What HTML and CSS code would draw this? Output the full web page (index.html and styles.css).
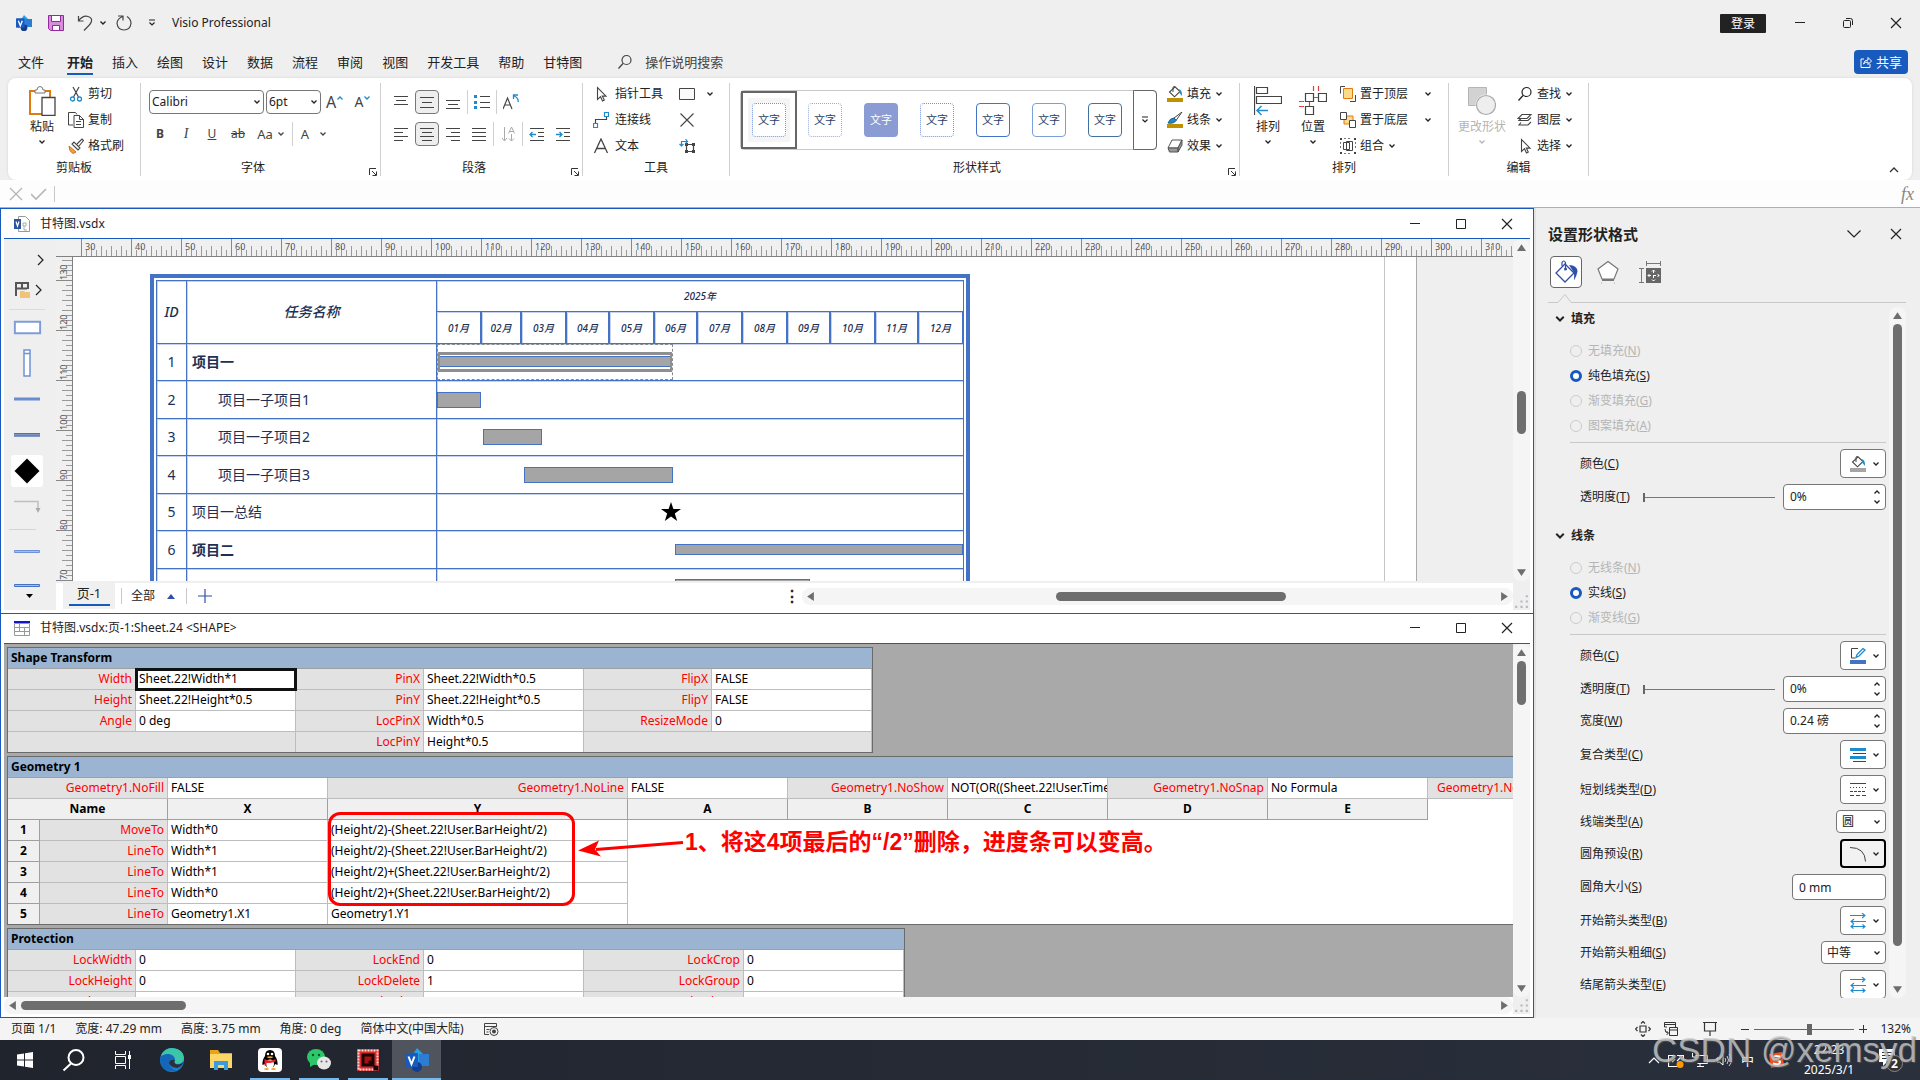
FILE: index.html
```
<!DOCTYPE html>
<html lang="zh-CN">
<head>
<meta charset="UTF-8">
<meta name="viewport" content="width=device-width, initial-scale=1.0">
<title>Visio Professional</title>
<link rel="stylesheet" href="styles.css">
</head>
<body>

<!-- Shared icons -->
<svg class="sprite" aria-hidden="true">
    <symbol id="chev" viewBox="0 0 8 8"><path d="M1.500 2.500 4 5l2.500-2.500" fill="none" stroke="currentColor" stroke-width="1.300"/></symbol>
    <symbol id="chev-up" viewBox="0 0 8 8"><path d="M1.500 5.500 4 3l2.500 2.500" fill="none" stroke="currentColor" stroke-width="1.300"/></symbol>
    <symbol id="chev-big" viewBox="0 0 16 16"><path d="M1.500 4.500 8 11l6.500-6.500" fill="none" stroke="currentColor" stroke-width="1.200"/></symbol>
    <symbol id="chev-right" viewBox="0 0 16 16"><path d="M5 3l5 5-5 5" fill="none" stroke="currentColor" stroke-width="1.200"/></symbol>
    <symbol id="more" viewBox="0 0 8 8"><path d="M1 1h6M1.500 3.500 4 6l2.500-2.500" fill="none" stroke="currentColor" stroke-width="1.200"/></symbol>
    <symbol id="close" viewBox="0 0 16 16"><path d="M3 3l10 10M13 3 3 13" fill="none" stroke="currentColor" stroke-width="1.200"/></symbol>
    <symbol id="min" viewBox="0 0 16 16"><path d="M3 7.500h10" stroke="currentColor"/></symbol>
    <symbol id="max" viewBox="0 0 16 16"><path d="M3.500 3.500h9v9h-9z" fill="none" stroke="currentColor"/></symbol>
    <symbol id="restore" viewBox="0 0 16 16"><rect x="3.500" y="5.500" width="7" height="7" rx="1" fill="none" stroke="currentColor"/><path d="M6 3.500h4.500q2 0 2 2V10" fill="none" stroke="currentColor"/></symbol>
    <symbol id="lens" viewBox="0 0 16 16"><circle cx="9.500" cy="6" r="4.500" fill="none" stroke="currentColor" stroke-width="1.200"/><path d="M6 9.500 1.500 14.500" stroke="currentColor" stroke-width="1.300"/></symbol>
    <symbol id="pointer" viewBox="0 0 16 16"><path d="M4.500 1.500v12l3-2.800 2 4.300 1.800-.9-2-4h3.700z" fill="#fff" stroke="#444" stroke-width="1.100"/></symbol>
    <symbol id="launcher" viewBox="0 0 8 8"><path d="M.5 7V.5H7M3 3l4 4M7.500 3.500v4h-4" fill="none" stroke="#333"/></symbol>
    <symbol id="bucket" viewBox="0 0 16 12"><path d="M8 .8 2.500 6l5 4.800L13 5.500z" fill="#fff" stroke="#444" stroke-width="1.100"/><path d="M6 6V1.200q1-1.500 2 0" fill="none" stroke="#444"/><path d="M11.500 3q4 1 3.500 7l-2.500-3z" fill="#1e8bcd"/></symbol>
    <symbol id="tri-l" viewBox="0 0 8 8"><path d="M7 0v8L1 4z" fill="#6e6e6e"/></symbol>
    <symbol id="tri-r" viewBox="0 0 8 8"><path d="M1 0v8l6-4z" fill="#6e6e6e"/></symbol>
    <symbol id="tri-u" viewBox="0 0 8 8"><path d="M0 7h8L4 1z" fill="#6e6e6e"/></symbol>
    <symbol id="tri-d" viewBox="0 0 8 8"><path d="M0 1h8L4 7z" fill="#6e6e6e"/></symbol>
    <symbol id="grip" viewBox="0 0 16 16"><path d="M12 2h2v2h-2zM12 7h2v2h-2zM7 7h2v2H7zM12 12h2v2h-2zM7 12h2v2H7zM2 12h2v2H2z" fill="#b4b8c0"/></symbol>
    <symbol id="visio" viewBox="0 0 24 24"><path d="M12 0l8 8-8 8-5-8z" fill="#29a0e8"/><path d="M14 6h10v12H14z" fill="#2b7cd3"/><circle cx="12" cy="19" r="5" fill="#103f91"/><rect y="5" width="13" height="14" rx="1" fill="#185abd"/><path d="M3.500 8.500 6.500 16l3-7.500" fill="none" stroke="#fff" stroke-width="2"/></symbol>
    <symbol id="arrows" viewBox="0 0 16 16"><path d="M0 2.500h15M12 0l3 2.500L12 5M1 8.500h15M4 6 1 8.500 4 11M1 13.500h14M3.500 11.500 1 13.500l2.500 2M12.500 11.500l2.500 2-2.500 2" fill="none" stroke="#1e8bcd" stroke-width="1.100"/></symbol>
</svg>

<!-- Title bar -->
<header class="titlebar">
    <svg class="i16"><use href="#visio"/></svg>
    <button class="tool save" aria-label="保存"><svg class="i16" viewBox="0 0 16 16"><path d="M.5 .5h15v15h-13l-2-2z" fill="#d58fd9" stroke="#9527a3"/><path d="M3.500 .5h9v6h-9zM4.500 10.500h7v5h-7z" fill="#fff" stroke="#9527a3"/></svg></button>
    <button class="tool undo" aria-label="撤消"><svg class="i16" viewBox="0 0 16 16"><path d="M1.500 1v5h5M1.500 6Q6 0 11 1.500t3 6Q13.500 9 7 15.500" fill="none" stroke="#444" stroke-width="1.200"/></svg></button>
    <button class="tool" aria-label="撤消选项"><svg class="i8"><use href="#chev"/></svg></button>
    <button class="tool redo" aria-label="重复"><svg class="i16" viewBox="0 0 16 16"><path d="M2 1h5v4.500M6.500 1.500Q1 4 1 8.500q1 6.500 7 6.500t7-6.500Q15 4 11 1.500" fill="none" stroke="#444" stroke-width="1.200"/></svg></button>
    <button class="tool qat" aria-label="自定义"><svg class="i8"><use href="#more"/></svg></button>
    <span class="app-name">Visio Professional</span>
    <button class="login">登录</button>
    <div class="app-buttons">
        <button class="tool" aria-label="最小化"><svg class="i16"><use href="#min"/></svg></button>
        <button class="tool" aria-label="还原"><svg class="i16"><use href="#restore"/></svg></button>
        <button class="tool" aria-label="关闭"><svg class="i16"><use href="#close"/></svg></button>
    </div>
</header>

<!-- Ribbon tabs -->
<nav class="tabs">
    <a href="#" class="file">文件</a>
    <a href="#" class="active">开始</a>
    <a href="#">插入</a>
    <a href="#">绘图</a>
    <a href="#">设计</a>
    <a href="#">数据</a>
    <a href="#">流程</a>
    <a href="#">审阅</a>
    <a href="#">视图</a>
    <a href="#">开发工具</a>
    <a href="#">帮助</a>
    <a href="#">甘特图</a>
    <button class="tell-me"><svg class="i16"><use href="#lens"/></svg>操作说明搜索</button>
    <button class="share"><svg class="i12" viewBox="0 0 12 12"><path d="M4 3H1v8.500h9V8M3.500 8Q4 4 8 4V1.500L11.500 5 8 8.500V6Q5 6 3.500 8z" fill="none" stroke="#fff"/></svg>共享</button>
</nav>

<!-- Ribbon -->
<section class="ribbon">
    <div class="group g-clip">
        <div class="group-body">
            <button class="big">
                <svg width="28" height="30" viewBox="0 0 28 30"><path d="M2 5h20v23H2z" fill="#fff" stroke="#e07b10" stroke-width="2"/><path d="M7 7V4h2q0-3.500 3-3.500T15 4h2v3z" fill="#fff" stroke="#777"/><path d="M14 11.500h13v18H14z" fill="#fff" stroke="#444" stroke-width="1.300"/></svg>
                <span>粘贴</span><svg class="i8"><use href="#chev"/></svg>
            </button>
            <div class="stack">
                <button class="small"><svg class="i16" viewBox="0 0 16 16"><path d="M5 1l5.500 10M11 1 5.500 11" stroke="#444" stroke-width="1.200"/><circle cx="4.500" cy="13" r="2" fill="none" stroke="#1e8bcd" stroke-width="1.300"/><circle cx="11.500" cy="13" r="2" fill="none" stroke="#1e8bcd" stroke-width="1.300"/></svg>剪切</button>
                <button class="small"><svg class="i16" viewBox="0 0 16 16"><path d="M5 13H.5V.5h7l1.500 2M6 3.500h5.500l4 4v8H6zM11.500 3.500v4h4M8 9.500h5M8 12.500h5" fill="none" stroke="#444"/></svg>复制</button>
                <button class="small"><svg class="i16" viewBox="0 0 16 16"><path d="M1 8l7 6-3 1.500q-4-2-4-7.500z" fill="#f0a04b" stroke="#d8700f"/><path d="M4 6l6 6 2-2-6-6zM9 6l5-5 1.500 1.500L11 8" fill="#fff" stroke="#444" stroke-width="1.100"/></svg>格式刷</button>
            </div>
        </div>
        <div class="group-name">剪贴板</div>
    </div>

    <div class="group g-font">
        <div class="group-body rows">
            <div class="row">
                <div class="pick face"><select aria-label="字体"><option>Calibri</option></select><svg class="i8"><use href="#chev"/></svg></div>
                <div class="pick size"><select aria-label="字号"><option>6pt</option></select><svg class="i8"><use href="#chev"/></svg></div>
                <button class="cell wide">A<svg class="i8 sup"><use href="#chev-up"/></svg></button>
                <button class="cell wide smaller">A<svg class="i8 sup"><use href="#chev"/></svg></button>
            </div>
            <div class="row">
                <button class="cell"><b>B</b></button>
                <button class="cell"><i class="serif">I</i></button>
                <button class="cell"><u>U</u></button>
                <button class="cell"><s>ab</s></button>
                <button class="cell wide">Aa<svg class="i8"><use href="#chev"/></svg></button>
                <span class="bar"></span>
                <button class="cell wide color">A<svg class="i8"><use href="#chev"/></svg></button>
            </div>
        </div>
        <div class="group-name with-launcher">字体</div>
        <svg class="i8 launcher"><use href="#launcher"/></svg>
    </div>

    <div class="group g-para">
        <div class="group-body rows">
            <div class="row">
                <button class="cell" aria-label="顶端对齐"><svg class="i16" viewBox="0 0 16 16"><path d="M1 2.500h14M3 6.500h10M1 10.500h14" stroke="#444"/></svg></button>
                <button class="cell on" aria-label="中部对齐"><svg class="i16" viewBox="0 0 16 16"><path d="M1 3.500h14M3 8.500h10M1 13.500h14" stroke="#444"/></svg></button>
                <button class="cell" aria-label="底端对齐"><svg class="i16" viewBox="0 0 16 16"><path d="M1 6.500h14M3 10.500h10M1 14.500h14" stroke="#444"/></svg></button>
                <span class="bar"></span>
                <button class="cell" aria-label="项目符号"><svg class="i16" viewBox="0 0 16 16"><path d="M0 1h3v3H0zM0 7h3v3H0zM0 12h3v3H0z" fill="#1e8bcd"/><path d="M6 2.500h10M6 8.500h10M6 13.500h10" stroke="#444"/></svg></button>
                <span class="bar"></span>
                <button class="cell" aria-label="旋转文字"><svg class="i16" viewBox="0 0 16 16"><path d="M0 15 4.500 4 9 15M2 11h5.500" fill="none" stroke="#444" stroke-width="1.200"/><path d="M15 8q1-4-4-6M10.500 5V1H15" fill="none" stroke="#1e8bcd" stroke-width="1.300"/></svg></button>
            </div>
            <div class="row">
                <button class="cell" aria-label="左对齐"><svg class="i16" viewBox="0 0 16 16"><path d="M1 2.500h14M1 6.500h9M1 10.500h14M1 14.500h9" stroke="#444"/></svg></button>
                <button class="cell on" aria-label="居中"><svg class="i16" viewBox="0 0 16 16"><path d="M1 2.500h14M3 6.500h10M1 10.500h14M3 14.500h10" stroke="#444"/></svg></button>
                <button class="cell" aria-label="右对齐"><svg class="i16" viewBox="0 0 16 16"><path d="M1 2.500h14M6 6.500h9M1 10.500h14M6 14.500h9" stroke="#444"/></svg></button>
                <button class="cell" aria-label="两端对齐"><svg class="i16" viewBox="0 0 16 16"><path d="M1 2.500h14M1 6.500h14M1 10.500h14M1 14.500h14" stroke="#444"/></svg></button>
                <span class="bar"></span>
                <button class="cell" aria-label="文字方向"><svg class="i16" viewBox="0 0 16 16"><path d="M4.500 1v13M2 12l2.500 3L7 12M11.500 8v7M9 12.500l2.500 2.500 2.500-2.500M8.500 7.500l3-6.500 3 6.500M9.500 5.500h4" fill="none" stroke="#aaa"/></svg></button>
                <span class="bar"></span>
                <button class="cell" aria-label="减少缩进"><svg class="i16" viewBox="0 0 16 16"><path d="M1 2.500h14M9 6.500h6M9 10.500h6M1 14.500h14" stroke="#444"/><path d="M7 8.500H1M3.500 6 1 8.500 3.500 11" fill="none" stroke="#1e8bcd" stroke-width="1.300"/></svg></button>
                <button class="cell" aria-label="增加缩进"><svg class="i16" viewBox="0 0 16 16"><path d="M1 2.500h14M9 6.500h6M9 10.500h6M1 14.500h14" stroke="#444"/><path d="M1 8.500h6M4.500 6 7 8.500 4.500 11" fill="none" stroke="#1e8bcd" stroke-width="1.300"/></svg></button>
            </div>
        </div>
        <div class="group-name with-launcher">段落</div>
        <svg class="i8 launcher"><use href="#launcher"/></svg>
    </div>

    <div class="group g-tools">
        <div class="group-body">
            <div class="stack">
                <button class="small"><svg class="i16"><use href="#pointer"/></svg>指针工具</button>
                <button class="small"><svg class="i16" viewBox="0 0 16 16"><path d="M2.500 11V7.500h11V5" fill="none" stroke="#444" stroke-width="1.200"/><path d="M.5 11.500h4v4h-4zM11.500 .5h4v4h-4z" fill="#fff" stroke="#1e8bcd" stroke-width="1.200"/></svg>连接线</button>
                <button class="small"><svg class="i16" viewBox="0 0 16 16"><path d="M1.500 15 8 1l6.500 14M4 10.500h8" fill="none" stroke="#444" stroke-width="1.300"/></svg>文本</button>
            </div>
            <div class="stack">
                <button class="small" aria-label="矩形"><svg class="i16" viewBox="0 0 16 16"><path d="M.5 2.500h15v11H.5z" fill="#fafafa" stroke="#444"/></svg><svg class="i8"><use href="#chev"/></svg></button>
                <button class="small" aria-label="删除"><svg class="i16" viewBox="0 0 16 16"><path d="M1.500 1.500l13 13M14.500 1.500l-13 13" stroke="#444" stroke-width="1.100"/></svg></button>
                <button class="small" aria-label="连接点"><svg class="i16" viewBox="0 0 16 16"><path d="M7.500 6.500h7v7h-7z" fill="none" stroke="#444" stroke-width="1.200"/><path d="M6 5h3v3H6zM13 5h3v3h-3zM6 12h3v3H6zM13 12h3v3h-3z" fill="#444"/><path d="M2.500 8V3.500H8M.5 6l2 2 2-2M6.500 1l2 2.500-2 2" fill="none" stroke="#1e8bcd" stroke-width="1.200"/></svg></button>
            </div>
        </div>
        <div class="group-name">工具</div>
    </div>

    <div class="group g-style">
        <div class="group-body">
            <div class="gallery">
                <button class="tile selected"><span class="dots">文字</span></button>
                <button class="tile"><span class="dots pale">文字</span></button>
                <button class="tile"><span class="solid">文字</span></button>
                <button class="tile"><span class="dots">文字</span></button>
                <button class="tile"><span class="line">文字</span></button>
                <button class="tile"><span class="line light">文字</span></button>
                <button class="tile"><span class="line teal">文字</span></button>
                <button class="gallery-more" aria-label="其他"><svg class="i8"><use href="#more"/></svg></button>
            </div>
            <div class="stack">
                <button class="small"><svg class="i16" viewBox="0 0 16 16"><use href="#bucket" width="16" height="12"/><path d="M0 12h16v4H0z" fill="#bf9000"/></svg>填充<svg class="i8"><use href="#chev"/></svg></button>
                <button class="small"><svg class="i16" viewBox="0 0 16 16"><path d="M15 0 7 6l2 2.500z" fill="#fff" stroke="#444"/><path d="M7 6q-4 0-6 5 6 1 8-2.500z" fill="#1e8bcd" stroke="#1b5f94"/><path d="M0 12h16v4H0z" fill="#bf9000"/></svg>线条<svg class="i8"><use href="#chev"/></svg></button>
                <button class="small"><svg class="i16" viewBox="0 0 16 16"><path d="M5 2h10l-4 8H1z" fill="#fff" stroke="#555"/><path d="M1 10h10v4H2.500zM15 2v5l-4 7v-4z" fill="#999" stroke="#555"/></svg>效果<svg class="i8"><use href="#chev"/></svg></button>
            </div>
        </div>
        <div class="group-name with-launcher">形状样式</div>
        <svg class="i8 launcher"><use href="#launcher"/></svg>
    </div>

    <div class="group g-arrange">
        <div class="group-body">
            <button class="big">
                <svg width="28" height="30" viewBox="0 0 28 30"><path d="M.5 0v29M2.500 1.500h11v6h-11zM2.500 10.500h25v7h-25z" fill="none" stroke="#444" stroke-width="1.200"/><path d="M14 24.500H3M7.500 20 3 24.500 7.500 29" fill="none" stroke="#1e8bcd" stroke-width="1.500"/></svg>
                <span>排列</span><svg class="i8"><use href="#chev"/></svg>
            </button>
            <button class="big">
                <svg width="28" height="30" viewBox="0 0 28 30"><path d="M6.500 7.500h8v8h-8zM19.500 7.500h8v8h-8zM6.500 20.500h8v8h-8z" fill="#fff" stroke="#444" stroke-width="1.200"/><path d="M14.500 0v5M19.500 0v5M15 11.500h4M0 15.500h5M0 20.500h5M10.500 16v4" stroke="#e03c3c" stroke-width="1.200"/></svg>
                <span>位置</span><svg class="i8"><use href="#chev"/></svg>
            </button>
            <div class="stack">
                <button class="small"><svg class="i16" viewBox="0 0 16 16"><path d="M5 .5H.5v7M10 15.500h5.500V9" fill="none" stroke="#444"/><path d="M3.500 2.500h9v10h-9z" fill="#fbdc8f" stroke="#e07b10"/></svg>置于顶层<svg class="i8 far"><use href="#chev"/></svg></button>
                <button class="small"><svg class="i16" viewBox="0 0 16 16"><path d="M4 4h9v8H4z" fill="#fbdc8f" stroke="#e07b10"/><path d="M.5 .5h6v7h-6zM9.500 8.500h6v7h-6z" fill="#fff" stroke="#444"/></svg>置于底层<svg class="i8 far"><use href="#chev"/></svg></button>
                <button class="small"><svg class="i16" viewBox="0 0 16 16"><path d="M3.500 4.500h6v7h-6zM6.500 3.500h6v9h-6z" fill="none" stroke="#444"/><path d="M0 0h2v2H0zM14 0h2v2h-2zM14 14h2v2h-2zM0 14h2v2H0z" fill="#444"/><path d="M4 .5h8M4 15.500h8M.5 4v8M15.500 4v8" stroke="#777" stroke-dasharray="2 2"/></svg>组合<svg class="i8"><use href="#chev"/></svg></button>
            </div>
        </div>
        <div class="group-name">排列</div>
    </div>

    <div class="group g-edit">
        <div class="group-body">
            <button class="big" disabled>
                <svg width="28" height="30" viewBox="0 0 28 30"><path d="M.5 1.500h18v18H.5z" fill="#d2d2d2" stroke="#b5b5b5"/><circle cx="18" cy="19" r="10.500" fill="#fff"/><circle cx="18" cy="19" r="9.500" fill="#eee" stroke="#aaa" stroke-width="1.200"/></svg>
                <span>更改形状</span><svg class="i8"><use href="#chev"/></svg>
            </button>
            <div class="stack">
                <button class="small"><svg class="i16"><use href="#lens"/></svg>查找<svg class="i8"><use href="#chev"/></svg></button>
                <button class="small"><svg class="i16" viewBox="0 0 16 16"><path d="M5 2.500h9l-4 4H1zM4 6.500l-2 2h9l3-3M4 10.500l-2 2.500h9l3-3" fill="none" stroke="#444" stroke-width="1.100"/></svg>图层<svg class="i8"><use href="#chev"/></svg></button>
                <button class="small"><svg class="i16"><use href="#pointer"/></svg>选择<svg class="i8"><use href="#chev"/></svg></button>
            </div>
        </div>
        <div class="group-name">编辑</div>
    </div>
    <button class="collapse" aria-label="折叠功能区"><svg class="i12" viewBox="0 0 12 12"><path d="M2 8l4-4 4 4" fill="none" stroke="#333" stroke-width="1.300"/></svg></button>
</section>

<!-- Formula bar -->
<div class="formula">
    <svg class="i16" viewBox="0 0 16 16"><path d="M2 2l12 12M14 2 2 14" stroke="#b5b5b5" stroke-width="1.300"/></svg>
    <svg class="i16" viewBox="0 0 16 16"><path d="M0 8l5 5L15 3" fill="none" stroke="#b5b5b5" stroke-width="1.600"/></svg>
    <input type="text" aria-label="公式">
    <em>fx</em>
</div>

<main>
    <div class="windows">
        <!-- Drawing window -->
        <section class="window">
            <div class="window-title">
                <svg class="i16" viewBox="0 0 16 16"><path d="M4.500 .5h7l4 4v11h-11z" fill="#fff" stroke="#999"/><path d="M9 7h3v3H9zM10 10v4h3" fill="none" stroke="#aaa"/><path d="M0 3h7v10H0z" fill="#2b579a"/><path d="M2 5.500 3.500 10 5 5.500" fill="none" stroke="#fff" stroke-width="1.200"/></svg>
                <span>甘特图.vsdx</span>
                <button class="tool" aria-label="最小化"><svg class="i16"><use href="#min"/></svg></button>
                <button class="tool" aria-label="最大化"><svg class="i16"><use href="#max"/></svg></button>
                <button class="tool" aria-label="关闭"><svg class="i16"><use href="#close"/></svg></button>
            </div>
            <div class="doc">
                <aside class="stencil">
                    <button class="expand" aria-label="展开"><svg class="i16"><use href="#chev-right"/></svg></button>
                    <button class="open" aria-label="形状"><svg class="i16" viewBox="0 0 16 16"><path d="M1 14V1h12v6M1 6.500h11M7 1v5" fill="none" stroke="#555" stroke-width="2"/><path d="M5 16V9h4l1 1h5v6z" fill="#f0c27a"/></svg><svg class="i16"><use href="#chev-right"/></svg></button>
                    <svg class="master" viewBox="0 0 36 36"><path d="M5.500 12h26v12h-26z" fill="#fff" stroke="#7f9cd8" stroke-width="2"/></svg>
                    <svg class="master" viewBox="0 0 36 36"><path d="M15 5h6v26h-6zM15 8.500h6" fill="#fff" stroke="#6f92d6" stroke-width="1.500"/></svg>
                    <svg class="master" viewBox="0 0 36 36"><path d="M5 16.500h26v3H5z" fill="#6b8bd0"/></svg>
                    <svg class="master" viewBox="0 0 36 36"><path d="M5 16.500h26v3H5z" fill="#8296bd"/><path d="M5 16.500h26M5 19h26" stroke="#4472c4"/></svg>
                    <svg class="master" viewBox="0 0 36 36"><rect x="2" y="2" width="32" height="32" rx="3" fill="#fff"/><path d="M18 5.500 30.500 18 18 30.500 5.500 18z"/></svg>
                    <svg class="master" viewBox="0 0 36 36"><path d="M5 12.500h24V21" fill="none" stroke="#bfbfbf" stroke-width="1.500"/><path d="M26.500 19h5L29 24z" fill="#aaa"/></svg>
                    <hr>
                    <svg class="master" viewBox="0 0 36 36"><path d="M5.500 16.500h25v2h-25z" fill="#a9bce3" stroke="#6f92d6"/></svg>
                    <svg class="master" viewBox="0 0 36 36"><path d="M5.500 14.500h25v2h-25z" fill="#a9bce3" stroke="#4472c4"/><path d="M17 24h7l-3.500 4z"/></svg>
                </aside>
                <div class="view">
                    <div class="ruler-top">
                        <span>30</span><span>40</span><span>50</span><span>60</span><span>70</span><span>80</span><span>90</span><span>100</span><span>110</span><span>120</span><span>130</span><span>140</span><span>150</span><span>160</span><span>170</span><span>180</span><span>190</span><span>200</span><span>210</span><span>220</span><span>230</span><span>240</span><span>250</span><span>260</span><span>270</span><span>280</span><span>290</span><span>300</span><span>310</span>
                    </div>
                    <div class="canvas">
                        <div class="ruler-side">
                            <span>130</span><span>120</span><span>110</span><span>100</span><span>90</span><span>80</span><span>70</span>
                        </div>
                        <div class="page">
                            <div class="printable">
                                <div class="chart">
                                    <table class="gantt">
                                        <colgroup>
                                            <col class="col-id"><col class="col-name">
                                            <col class="d31"><col class="d28"><col class="d31"><col class="d30"><col class="d31"><col class="d30"><col class="d31"><col class="d31"><col class="d30"><col class="d31"><col class="d30"><col class="d31">
                                        </colgroup>
                                        <thead>
                                            <tr><th rowspan="2">ID</th><th rowspan="2">任务名称</th><th colspan="12" class="time">2025年</th></tr>
                                            <tr class="months"><th>01月</th><th>02月</th><th>03月</th><th>04月</th><th>05月</th><th>06月</th><th>07月</th><th>08月</th><th>09月</th><th>10月</th><th>11月</th><th>12月</th></tr>
                                        </thead>
                                        <tbody>
                                            <tr><td>1</td><td class="name"><b>项目一</b></td><td colspan="12"><div class="picked" style="width: 236px"><div class="task summary"></div></div></td></tr>
                                            <tr><td>2</td><td class="name sub">项目一子项目1</td><td colspan="12"><div class="task" style="width: 44px"></div></td></tr>
                                            <tr><td>3</td><td class="name sub">项目一子项目2</td><td colspan="12"><div class="task" style="margin-left: 46px; width: 59px"></div></td></tr>
                                            <tr><td>4</td><td class="name sub">项目一子项目3</td><td colspan="12"><div class="task" style="margin-left: 87px; width: 149px"></div></td></tr>
                                            <tr><td>5</td><td class="name">项目一总结</td><td colspan="12"><svg class="star" style="margin-left: 224px" viewBox="0 0 20 20"><path d="M10 0l2.400 7H20l-6.200 4.500L16.200 19 10 14.500 3.800 19l2.400-7.500L0 7h7.600z"/></svg></td></tr>
                                            <tr><td>6</td><td class="name"><b>项目二</b></td><td colspan="12"><div class="task thin" style="margin-left: 238px"></div></td></tr>
                                            <tr><td></td><td></td><td colspan="12"><div class="task" style="margin-left: 238px; width: 135px"></div></td></tr>
                                        </tbody>
                                    </table>
                                </div>
                            </div>
                        </div>
                    </div>
                    <div class="page-tabs">
                        <button class="page-tab">页-1</button>
                        <button class="all-pages">全部<svg class="i8" viewBox="0 0 8 8"><path d="M0 7h8L4 2z" fill="#2f4fa8"/></svg></button>
                        <button class="add-page" aria-label="插入页"><svg class="i16" viewBox="0 0 16 16"><path d="M8 1v14M1 8h14" stroke="#2f4fa8" stroke-width="1.200"/></svg></button>
                        <span class="splitter">⋮</span>
                        <div class="scroll-x">
                            <svg><use href="#tri-l"/></svg>
                            <div class="track page-pos"><div class="thumb"></div></div>
                            <svg><use href="#tri-r"/></svg>
                        </div>
                    </div>
                </div>
                <div class="side">
                    <div class="scroll-y">
                        <svg><use href="#tri-u"/></svg>
                        <div class="track doc-pos"><div class="thumb"></div></div>
                        <svg><use href="#tri-d"/></svg>
                    </div>
                    <svg class="grip high"><use href="#grip" y="12" width="17" height="17"/></svg>
                </div>
            </div>
        </section>

        <!-- ShapeSheet window -->
        <section class="window sheet-window">
            <div class="window-title">
                <svg class="i16" viewBox="0 0 16 16"><path d="M.5 3.500h15v12H.5zM.5 7.500h15M.5 11.500h15M5.500 3.500v8M10.500 7.500v8" fill="#fff" stroke="#999"/><path d="M0 1h16v2H0z" fill="#1414c8"/></svg>
                <span>甘特图.vsdx:页-1:Sheet.24 &lt;SHAPE&gt;</span>
                <button class="tool" aria-label="最小化"><svg class="i16"><use href="#min"/></svg></button>
                <button class="tool" aria-label="最大化"><svg class="i16"><use href="#max"/></svg></button>
                <button class="tool" aria-label="关闭"><svg class="i16"><use href="#close"/></svg></button>
            </div>
            <div class="doc">
                <div class="view">
                    <div class="sheet">
                        <table class="cells">
                            <colgroup><col class="w128"><col class="w160"><col class="w128"><col class="w160"><col class="w128"><col class="w160"></colgroup>
                            <tr><th class="section" colspan="6">Shape Transform</th></tr>
                            <tr><th>Width</th><td class="current">Sheet.22!Width*1</td><th>PinX</th><td>Sheet.22!Width*0.5</td><th>FlipX</th><td>FALSE</td></tr>
                            <tr><th>Height</th><td>Sheet.22!Height*0.5</td><th>PinY</th><td>Sheet.22!Height*0.5</td><th>FlipY</th><td>FALSE</td></tr>
                            <tr><th>Angle</th><td>0 deg</td><th>LocPinX</th><td>Width*0.5</td><th>ResizeMode</th><td>0</td></tr>
                            <tr><th colspan="2"></th><th>LocPinY</th><td>Height*0.5</td><th colspan="2"></th></tr>
                        </table>

                        <table class="cells">
                            <colgroup><col class="w32"><col class="w128"><col class="w160"><col class="w300"><col class="w160"><col class="w160"><col class="w160"><col class="w160"><col class="w160"><col class="w160"></colgroup>
                            <tr><th class="section" colspan="10">Geometry 1</th></tr>
                            <tr><th colspan="2">Geometry1.NoFill</th><td>FALSE</td><th>Geometry1.NoLine</th><td>FALSE</td><th>Geometry1.NoShow</th><td>NOT(OR((Sheet.22!User.TimescaleEnd</td><th>Geometry1.NoSnap</th><td>No Formula</td><th class="start">Geometry1.NoQuickDrag</th></tr>
                            <tr class="heads"><th colspan="2">Name</th><th>X</th><th>Y</th><th>A</th><th>B</th><th>C</th><th>D</th><th>E</th><td rowspan="6"></td></tr>
                            <tr><th class="num">1</th><th>MoveTo</th><td>Width*0</td><td>(Height/2)-(Sheet.22!User.BarHeight/2)</td><td class="blank" colspan="5" rowspan="5"></td></tr>
                            <tr><th class="num">2</th><th>LineTo</th><td>Width*1</td><td>(Height/2)-(Sheet.22!User.BarHeight/2)</td></tr>
                            <tr><th class="num">3</th><th>LineTo</th><td>Width*1</td><td>(Height/2)+(Sheet.22!User.BarHeight/2)</td></tr>
                            <tr><th class="num">4</th><th>LineTo</th><td>Width*0</td><td>(Height/2)+(Sheet.22!User.BarHeight/2)</td></tr>
                            <tr><th class="num">5</th><th>LineTo</th><td>Geometry1.X1</td><td>Geometry1.Y1</td></tr>
                        </table>

                        <table class="cells">
                            <colgroup><col class="w128"><col class="w160"><col class="w128"><col class="w160"><col class="w160"><col class="w160"></colgroup>
                            <tr><th class="section" colspan="6">Protection</th></tr>
                            <tr><th>LockWidth</th><td>0</td><th>LockEnd</th><td>0</td><th>LockCrop</th><td>0</td></tr>
                            <tr><th>LockHeight</th><td>0</td><th>LockDelete</th><td>1</td><th>LockGroup</th><td>0</td></tr>
                            <tr><th>LockAspect</th><td>0</td><th>LockSelect</th><td>0</td><th>LockCalcWH</th><td>0</td></tr>
                        </table>

                        <!-- Callout over the Y cells -->
                        <div class="callout-box"></div>
                        <svg class="callout-arrow" viewBox="0 0 106 24"><path d="M105 6.500 18 13.500" stroke="#f00" stroke-width="3"/><path d="M0 14.500 21 4.500l-4 9 6 7z" fill="#f00"/></svg>
                        <p class="callout-text">1、将这4项最后的“/2”删除，进度条可以变高。</p>
                    </div>
                    <div class="scroll-x">
                        <svg><use href="#tri-l"/></svg>
                        <div class="track"><div class="thumb"></div></div>
                        <svg><use href="#tri-r"/></svg>
                    </div>
                </div>
                <div class="side">
                    <div class="scroll-y">
                        <svg><use href="#tri-u"/></svg>
                        <div class="track"><div class="thumb"></div></div>
                        <svg><use href="#tri-d"/></svg>
                    </div>
                    <svg class="grip"><use href="#grip"/></svg>
                </div>
            </div>
        </section>
    </div>

    <!-- Format shape pane -->
    <aside class="pane">
        <div class="pane-head">
            <h2>设置形状格式</h2>
            <button class="tool" aria-label="选项"><svg class="i16"><use href="#chev-big"/></svg></button>
            <button class="tool" aria-label="关闭"><svg class="i16"><use href="#close"/></svg></button>
        </div>
        <div class="pane-tabs">
            <button class="active" aria-label="填充与线条"><svg width="24" height="24" viewBox="0 0 24 24"><path d="M11 4 2 13l9 9 9-9z" fill="#fff" stroke="#2f4fa8" stroke-width="1.300"/><path d="M8 6V2.500Q9.500-.5 11.500 2.500V9" fill="none" stroke="#2f4fa8" stroke-width="1.200"/><circle cx="11.500" cy="9" r="1.500" fill="#2f4fa8"/><path d="M15 5q8 0 8.500 6.500-1 5-3.500 9 .5-7-.5-8.500z" fill="#2f4fa8"/></svg></button>
            <button aria-label="效果"><svg width="24" height="24" viewBox="0 0 24 24"><path d="M12 1.500 22 9l-4 10H6L2 9z" fill="#fff" stroke="#777" stroke-width="1.200"/><path d="M6 19h12v2H6z" fill="#777"/><path d="M5.500 22v2M18.500 22v2" stroke="#ccc"/></svg></button>
            <button aria-label="大小"><svg width="24" height="24" viewBox="0 0 24 24"><path d="M8 3.500h14M8.500 1v5M22.500 1v5M3.500 8v14M1 8.500h5M1 22.500h5" stroke="#777"/><path d="M8 8h15v15H8z" fill="#666"/><path d="M15.500 10v11M10 15.500h11" stroke="#fff" stroke-dasharray="3 2"/><path d="M14 11.500l1.500-1.500 1.500 1.500M14 19.500l1.500 1.500 1.500-1.500M11.500 14 10 15.500l1.500 1.500M19.500 14l1.500 1.500-1.500 1.500" fill="none" stroke="#fff"/></svg></button>
        </div>
        <svg class="pane-line" height="10" viewBox="0 0 358 10"><path d="M0 9.500h10L17 1.500l6 8h335" fill="none" stroke="#c8c8c8"/></svg>
        <div class="pane-body">
            <form>
                <h3><svg class="i12" viewBox="0 0 8 8"><use href="#chev"/></svg>填充</h3>
                <div class="radios">
                    <label class="off"><input type="radio" name="fill" disabled>无填充(<u>N</u>)</label>
                    <label><input type="radio" name="fill" checked>纯色填充(<u>S</u>)</label>
                    <label class="off"><input type="radio" name="fill" disabled>渐变填充(<u>G</u>)</label>
                    <label class="off"><input type="radio" name="fill" disabled>图案填充(<u>A</u>)</label>
                </div>
                <div class="fields">
                    <div class="field tall"><label for="fill-color">颜色(<u>C</u>)</label><button type="button" id="fill-color" class="drop"><svg class="i16" viewBox="0 0 16 16"><use href="#bucket" width="16" height="12"/><path d="M0 12h16v4H0z" fill="#a5a5a5"/></svg><svg class="i8"><use href="#chev"/></svg></button></div>
                    <div class="field"><label for="fill-alpha">透明度(<u>T</u>)</label><input type="range" id="fill-alpha" value="0"><div class="spin"><input type="text" value="0%" aria-label="透明度"><span><svg class="i8"><use href="#chev-up"/></svg><svg class="i8"><use href="#chev"/></svg></span></div></div>
                </div>
                <h3><svg class="i12" viewBox="0 0 8 8"><use href="#chev"/></svg>线条</h3>
                <div class="radios">
                    <label class="off"><input type="radio" name="line" disabled>无线条(<u>N</u>)</label>
                    <label><input type="radio" name="line" checked>实线(<u>S</u>)</label>
                    <label class="off"><input type="radio" name="line" disabled>渐变线(<u>G</u>)</label>
                </div>
                <div class="fields">
                    <div class="field tall"><label for="line-color">颜色(<u>C</u>)</label><button type="button" id="line-color" class="drop"><svg class="i16" viewBox="0 0 16 16"><path d="M8 .5H1.500V10H5" fill="none" stroke="#444"/><path d="M6 9.500l1-3L13 .5l2 1.500-6 6z" fill="#fff" stroke="#1e8bcd" stroke-width="1.300"/><path d="M0 12h16v4H0z" fill="#4472c4"/></svg><svg class="i8"><use href="#chev"/></svg></button></div>
                    <div class="field"><label for="line-alpha">透明度(<u>T</u>)</label><input type="range" id="line-alpha" value="0"><div class="spin"><input type="text" value="0%" aria-label="透明度"><span><svg class="i8"><use href="#chev-up"/></svg><svg class="i8"><use href="#chev"/></svg></span></div></div>
                    <div class="field"><label for="line-width">宽度(<u>W</u>)</label><div class="spin"><input type="text" id="line-width" value="0.24 磅"><span><svg class="i8"><use href="#chev-up"/></svg><svg class="i8"><use href="#chev"/></svg></span></div></div>
                    <div class="field tall"><label for="compound">复合类型(<u>C</u>)</label><button type="button" id="compound" class="drop"><svg class="i16" viewBox="0 0 16 16"><path d="M0 1h16v3H0zM0 9h16v3H0z" fill="#1e8bcd"/><path d="M3 6.500h13M3 14.500h13" stroke="#444"/></svg><svg class="i8"><use href="#chev"/></svg></button></div>
                    <div class="field tall"><label for="dash">短划线类型(<u>D</u>)</label><button type="button" id="dash" class="drop"><svg class="i16" viewBox="0 0 16 16"><path d="M0 1.500h16" stroke="#444"/><path d="M0 5.500h16" stroke="#444" stroke-dasharray="1 2"/><path d="M0 9.500h16" stroke="#444" stroke-dasharray="3 1"/><path d="M0 13.500h16" stroke="#444" stroke-dasharray="4 2"/></svg><svg class="i8"><use href="#chev"/></svg></button></div>
                    <div class="field low"><label for="cap">线端类型(<u>A</u>)</label><div class="pick cap"><select id="cap"><option>圆</option></select><svg class="i8"><use href="#chev"/></svg></div></div>
                    <div class="field tall"><label for="rounding">圆角预设(<u>R</u>)</label><button type="button" id="rounding" class="drop focus"><svg class="i16" viewBox="0 0 16 16"><path d="M0 1.500q15 0 15.500 14" fill="none" stroke="#444"/></svg><svg class="i8"><use href="#chev"/></svg></button></div>
                    <div class="field"><label for="radius">圆角大小(<u>S</u>)</label><input type="text" id="radius" class="text" value="0 mm"></div>
                    <div class="field tall"><label for="begin-type">开始箭头类型(<u>B</u>)</label><button type="button" id="begin-type" class="drop"><svg class="i16"><use href="#arrows"/></svg><svg class="i8"><use href="#chev"/></svg></button></div>
                    <div class="field low"><label for="begin-size">开始箭头粗细(<u>S</u>)</label><div class="pick mid"><select id="begin-size"><option>中等</option></select><svg class="i8"><use href="#chev"/></svg></div></div>
                    <div class="field tall"><label for="end-type">结尾箭头类型(<u>E</u>)</label><button type="button" id="end-type" class="drop"><svg class="i16"><use href="#arrows"/></svg><svg class="i8"><use href="#chev"/></svg></button></div>
                </div>
            </form>
            <div class="scroll-y">
                <svg><use href="#tri-u"/></svg>
                <div class="track"><div class="thumb"></div></div>
                <svg><use href="#tri-d"/></svg>
            </div>
        </div>
    </aside>
</main>

<!-- Status bar -->
<footer class="status">
    <span>页面 1/1</span>
    <span>宽度: 47.29 mm</span>
    <span>高度: 3.75 mm</span>
    <span>角度: 0 deg</span>
    <span>简体中文(中国大陆)</span>
    <svg class="i16" viewBox="0 0 16 16"><path d="M6 13.500H1.500v-11h12V6M1.500 5.500h12M3.500 8.500h3M3.500 11h2" fill="none" stroke="#444"/><circle cx="11" cy="10.500" r="4" fill="none" stroke="#444"/><circle cx="11" cy="10.500" r="2" fill="#444"/></svg>
    <div class="zoom">
        <svg class="i16" viewBox="0 0 16 16"><path d="M5 5h6v6H5zM6 2.500 8 .5l2 2M6 13.500l2 2 2-2M2.500 6l-2 2 2 2M13.500 6l2 2-2 2" fill="none" stroke="#333" stroke-width="1.200"/></svg>
        <svg class="i16" viewBox="0 0 16 16"><path d="M4 6H1.500v-4.500h11V6M1.500 3.500h11M6.500 6.500h8v8h-8zM6.500 9h8M2 8q0 4 3 4M3.500 10 5.500 12l-2 2" fill="none" stroke="#333"/></svg>
        <svg class="i16 present" viewBox="0 0 16 16"><path d="M1 1.500h14M2.500 2v8h11V2M8 10v5" fill="none" stroke="#333" stroke-width="1.200"/></svg>
        <button class="tool" aria-label="缩小"><svg class="i8" viewBox="0 0 8 8"><path d="M0 4.500h8" stroke="#333"/></svg></button>
        <input type="range" value="55" aria-label="缩放">
        <button class="tool" aria-label="放大"><svg class="i8" viewBox="0 0 8 8"><path d="M0 4.500h8M4.500 0v8" stroke="#333"/></svg></button>
        <span>132%</span>
    </div>
</footer>

<!-- Taskbar -->
<div class="taskbar">
    <button aria-label="开始"><svg width="16" height="16" viewBox="0 0 16 16"><path d="M0 2.500 7 1.500v6H0zM8 1.300 16 0v7.500H8zM0 8.500h7v6L0 13.500zM8 8.500h8V16l-8-1.300z" fill="#fff"/></svg></button>
    <button aria-label="搜索"><svg width="24" height="24" viewBox="0 0 24 24"><circle cx="14" cy="9.500" r="7.500" fill="none" stroke="#fff" stroke-width="2"/><path d="M9 15.500 1.500 22.500" stroke="#fff" stroke-width="2"/></svg></button>
    <button aria-label="任务视图"><svg width="18" height="18" viewBox="0 0 18 18"><path d="M1.500 0v3.500h10V0M1.500 18v-3.500h10V18M1.500 5.500h10v7h-10zM15.500 0v4M15.500 8v10" fill="none" stroke="#fff"/><path d="M14 4h3v4h-3z" fill="#fff"/></svg></button>
    <button aria-label="Edge"><svg width="24" height="24" viewBox="0 0 24 24"><circle cx="12" cy="12" r="12" fill="#1b7fd0"/><path d="M1 8Q4 0 12 0q12 1 12 11-1 5-7 5-4-1-2-4 0-5-6-6-5 0-8 2z" fill="#3cc6a8"/><path d="M0 12q1-6 8-6 6 1 7 6-5-2-6 3 1 6 8 8Q1 25 0 12z" fill="#1566b8"/><path d="M15 12q-2 3 2 4.500 5 0 6.500-3-1 5-6.500 6.500-8-1-8-6 2-3 6-2z" fill="#2a2f39"/></svg></button>
    <button aria-label="文件资源管理器"><svg width="22" height="20" viewBox="0 0 22 20"><path d="M0 0h8l2 3h12v15H0z" fill="#e8a317"/><path d="M0 4h22v14H0z" fill="#fcd667"/><path d="M4 20v-9h14v9h-4v-5H8v5z" fill="#3b9be0"/></svg></button>
    <button class="running" aria-label="QQ"><svg width="24" height="24" viewBox="0 0 24 24"><rect width="24" height="24" rx="4" fill="#fff"/><path d="M12 2q5 0 5 6 3 4 2.500 9L17 16q-1 4-5 4t-5-4l-2.500 1Q4 12 7 8q0-6 5-6z"/><ellipse cx="12" cy="16" rx="4" ry="4.500" fill="#fff"/><path d="M6.500 11q6 3 11 0v2.500q-5 2-9 1.500v3l-2-.5z" fill="#e8202a"/><circle cx="10" cy="6" r="1.300" fill="#fff"/><circle cx="14" cy="6" r="1.300" fill="#fff"/><path d="M8.500 9q3.500-1.500 7 0-3.500 2.500-7 0zM6 21q3-2 5 0 0 1-2.500 1T6 21zM13 21q3-2 5 0 0 1-2.500 1T13 21z" fill="#f5a21b"/></svg></button>
    <button class="running" aria-label="微信"><svg width="24" height="22" viewBox="0 0 24 22"><ellipse cx="9" cy="8" rx="9" ry="8" fill="#2bc76a"/><path d="M3 13v5l5-3z" fill="#2bc76a"/><circle cx="6" cy="6" r="1.200" fill="#14532d"/><circle cx="12" cy="6" r="1.200" fill="#14532d"/><ellipse cx="17" cy="14" rx="7" ry="6.500" fill="#e6e6e6"/><circle cx="14.500" cy="12.500" r="1" fill="#666"/><circle cx="19.500" cy="12.500" r="1" fill="#666"/></svg></button>
    <button class="running" aria-label="Q"><svg width="22" height="22" viewBox="0 0 22 22"><path d="M0 0h22v22H0z" fill="#d92a2a"/><path d="M1.500 1.500h19v19h-19z" fill="none" stroke="#fbdcdc" stroke-width="2" stroke-dasharray="2 1"/><path d="M6 6h10v10H6zM12 12l4 4M18 18h2v2h-2z" fill="#a80f0f" stroke="#1a0505" stroke-width="3"/></svg></button>
    <button class="running current" aria-label="Visio"><svg width="24" height="24"><use href="#visio"/></svg></button>
    <div class="tray">
        <svg class="i12" viewBox="0 0 12 12"><path d="M1 9l5-5 5 5" fill="none" stroke="#fff" stroke-width="1.200"/></svg>
        <svg class="i16" viewBox="0 0 16 16"><path d="M9 14.500H.5v-11h6M9 3.500h6.500V8M4 10l3-3M12 6 9 9" fill="none" stroke="#fff" stroke-width="1.200"/><circle cx="12" cy="12.500" r="3.500" fill="#f90"/></svg>
        <svg class="i16" viewBox="0 0 16 16"><path d="M.5 1v4h4M3.500 3.500h12v8h-10M8 11.500v3M5 14.500h7" fill="none" stroke="#fff"/></svg>
        <svg class="i16" viewBox="0 0 16 16"><path d="M1 6h2.500L7 3v10L3.500 10H1z" fill="none" stroke="#fff"/><path d="M9 6q1.500 2 0 4M11 4q3 4 0 8M13 2q5 6 0 12" fill="none" stroke="#ccc"/></svg>
        <span class="ime">中</span>
        <svg class="i16" viewBox="0 0 16 16"><path d="M1 2l13-2 2 13-13 3z" fill="#f4511e"/><path d="M12 4.500Q5 3 5 6q0 2 3.500 2T12 10.500q-1 3-7 1" fill="none" stroke="#fff" stroke-width="2"/></svg>
        <div class="clock"><time>22:23</time><time>2025/3/1</time></div>
        <svg class="notes" viewBox="0 0 24 24"><path d="M0 1h16v13H8l-4 4v-4H0z" fill="#fff"/><path d="M3 4.500h10M3 7.500h10M3 10.500h7" stroke="#2a303c"/><circle cx="15.500" cy="15.500" r="8" fill="#333" stroke="#888"/><text x="15.500" y="20" text-anchor="middle">2</text></svg>
    </div>
    <span class="watermark">CSDN @xemsyd</span>
</div>

</body>
</html>
```
FILE: styles.css
```
* {
    box-sizing: border-box;
}
body {
    margin: 0;
    height: 100vh;
    overflow: hidden;
    display: flex;
    flex-direction: column;
    background: #efefef;
    color: #222;
    font: 12px/16px "Noto Sans", "Noto Sans CJK SC", sans-serif;
}
button, input, select {
    margin: 0;
    padding: 0;
    border: 0;
    background: none;
    color: inherit;
    font: inherit;
    outline: 0;
}
button {
    white-space: nowrap;
}
svg {
    display: block;
    flex: none;
}
.sprite {
    position: absolute;
    width: 0;
    height: 0;
}
.i8 {
    width: 8px;
    height: 8px;
}
.i12 {
    width: 12px;
    height: 12px;
}
.i16 {
    width: 16px;
    height: 16px;
}
.tool {
    display: flex;
    align-items: center;
    justify-content: center;
}

/* Title bar */
.titlebar {
    display: flex;
    align-items: center;
    height: 46px;
    padding: 0 16px;
}
.save {
    margin-left: 16px;
}
.undo {
    margin: 0 6px 0 13px;
}
.redo {
    margin: 0 16px 0 9px;
}
.app-name {
    margin: 0 auto 0 16px;
}
.login {
    width: 46px;
    height: 19px;
    border-radius: 1px;
    background: #222;
    color: #fff;
    line-height: 19px;
}
.app-buttons {
    display: flex;
    gap: 32px;
    margin-left: 26px;
}

/* Tabs */
.tabs {
    display: flex;
    align-items: center;
    gap: 19px;
    height: 32px;
    padding: 0 12px 0 18px;
    font-size: 13px;
}
.tabs a {
    height: 26px;
    line-height: 26px;
    color: #222;
    text-decoration: none;
}
.tabs .file {
    margin-right: 4px;
}
.tabs .active {
    border-bottom: 2px solid #185abd;
    font-weight: bold;
}
.tell-me {
    display: flex;
    align-items: center;
    gap: 12px;
    margin-left: 16px;
    color: #444;
}
.share {
    display: flex;
    align-items: center;
    justify-content: center;
    gap: 4px;
    width: 54px;
    height: 24px;
    margin-left: auto;
    border-radius: 4px;
    background: #185abd;
    color: #fff;
}

/* Ribbon */
.ribbon {
    display: flex;
    height: 102px;
    margin: 0 8px;
    padding: 5px 0 4px;
    border-radius: 8px;
    background: #fff;
    box-shadow: 0 0 3px #d5d5d5;
}
.group {
    position: relative;
    display: flex;
    flex-direction: column;
    border-right: 1px solid #d0d0d0;
}
.group-body {
    display: flex;
    flex: 1;
}
.group-name {
    text-align: center;
}
.with-launcher {
    padding-right: 15px;
}
.launcher {
    position: absolute;
    right: 3px;
    bottom: 0;
}
.g-clip { width: 133px; }
.g-font { width: 240px; }
.g-para { width: 202px; }
.g-tools { width: 147px; }
.g-style { width: 510px; }
.g-arrange { width: 209px; }
.g-edit { width: 140px; }
.big {
    display: flex;
    flex-direction: column;
    align-items: center;
    gap: 3px;
    padding-top: 3px;
}
.big span {
    line-height: 16px;
}
.big:disabled {
    color: #b5b5b5;
}
.stack {
    display: flex;
    flex-direction: column;
    margin-top: -2px;
}
.small {
    display: flex;
    align-items: center;
    gap: 4px;
    height: 26px;
}
.small .far {
    margin-left: 12px;
}
.g-clip .big {
    width: 28px;
    margin: 0 12px 0 20px;
}
.rows {
    flex-direction: column;
    padding-top: 7px;
    gap: 8px;
}
.row {
    display: flex;
    align-items: center;
    height: 24px;
}
.bar {
    width: 1px;
    height: 24px;
    margin: 0 1px;
    background: #d0d0d0;
}
.cell {
    display: flex;
    align-items: center;
    justify-content: center;
    width: 26px;
    height: 24px;
    color: #444;
}
.cell.on {
    width: 24px;
    margin: 0 1px;
    border: 1px solid #777;
    border-radius: 4px;
    background: #eee;
}
.serif {
    font-family: "Liberation Serif", serif;
    font-size: 14px;
}
.g-font .row {
    padding-left: 8px;
}
.g-font .wide {
    width: 28px;
    font-size: 16px;
}
.g-font .smaller {
    font-size: 14px;
}
.g-font .row + .row {
    padding-left: 6px;
}
.g-font .row + .row .wide {
    width: 40px;
    gap: 4px;
    font-size: 13px;
}
.g-font .row + .row .color {
    gap: 10px;
}
.sup {
    margin-bottom: 8px;
    color: #1e8bcd;
}
.pick {
    display: grid;
    align-items: center;
    border: 1px solid #777;
    border-radius: 4px;
    background: #fff;
}
.pick select, .pick svg {
    grid-area: 1 / 1;
}
.pick svg {
    justify-self: end;
    margin-right: 2px;
    pointer-events: none;
}
.pick select {
    appearance: none;
    width: 100%;
    padding-left: 2px;
}
.face {
    width: 115px;
    height: 24px;
    margin-right: 2px;
}
.size {
    width: 55px;
    height: 24px;
}
.g-para .row {
    padding-left: 7px;
}
.g-tools .group-body {
    gap: 16px;
    padding-left: 10px;
}
.g-tools .small {
    gap: 6px;
}
.g-tools .stack + .stack .small {
    gap: 11px;
}
.g-style .group-body {
    gap: 10px;
    padding-left: 10px;
}
.gallery {
    display: flex;
    height: 60px;
    margin-top: 7px;
    border: 1px solid #c8c8c8;
    border-radius: 4px;
}
.tile {
    display: grid;
    place-items: center;
    width: 56px;
}
.tile.selected {
    border: 2px solid #666;
    background: #f5f5f5;
    box-shadow: inset 0 0 0 5px #fff;
}
.tile span {
    display: grid;
    place-items: center;
    width: 34px;
    height: 34px;
    border: 1px solid #4472c4;
    border-radius: 4px;
    background: #fff;
    color: #2a3f66;
    font-size: 11px;
}
.tile .dots {
    border: 1px dotted #6f92d6;
}
.tile .pale {
    border-color: #9aa9d8;
}
.tile .solid {
    border: 0;
    background: #8b9bd3;
    color: #fff;
}
.tile .light {
    border-color: #7ba0d8;
}
.tile .teal {
    border-color: #41719c;
}
.gallery-more {
    display: grid;
    place-items: center;
    width: 24px;
    margin: -1px;
    margin-left: 0;
    border: 1px solid #666;
    border-radius: 0 4px 4px 0;
}
.g-arrange .group-body {
    padding-left: 14px;
}
.g-arrange .big {
    width: 28px;
    margin-right: 17px;
}
.g-arrange .big + .big {
    margin-right: 13px;
}
.g-edit .group-body {
    padding-left: 8px;
}
.g-edit .big {
    width: 50px;
    margin-right: 10px;
}
.collapse {
    margin: auto 12px 0 auto;
}

/* Formula bar */
.formula {
    display: flex;
    align-items: center;
    gap: 7px;
    height: 28px;
    padding: 0 6px 0 8px;
    border-bottom: 1px solid #b0b0b0;
    background: #fdfdfd;
}
.formula input {
    flex: 1;
    height: 16px;
    border-left: 1px solid #c8c8c8;
}
.formula em {
    color: #888;
    font: italic 18px/20px "Liberation Serif", serif;
}

/* Windows */
main {
    display: flex;
    flex: 1;
    min-height: 0;
}
.windows {
    display: flex;
    flex: 1;
    flex-direction: column;
    min-width: 0;
}
.window {
    display: flex;
    flex: 1 1 0;
    flex-direction: column;
    min-height: 0;
    border: 1px solid #185abd;
    border-bottom: 0;
    background: #fff;
}
.sheet-window {
    border-bottom: 1px solid #185abd;
}
.window-title {
    display: flex;
    align-items: center;
    height: 30px;
    margin: 0 3px;
    padding: 0 15px 0 10px;
    border-bottom: 1px solid #185abd;
}
.window-title span {
    margin: 0 auto 0 10px;
}
.window-title .tool {
    margin-left: 30px;
}
.doc {
    display: flex;
    flex: 1;
    min-height: 0;
    margin: 0 3px 3px;
}
.view {
    display: flex;
    flex: 1;
    flex-direction: column;
    min-width: 0;
}
.side {
    display: flex;
    flex-direction: column;
    width: 17px;
    background: #efefef;
}
.grip {
    width: 17px;
    height: 17px;
}
.grip.high {
    height: 29px;
}

/* Scroll bars */
.scroll-x, .scroll-y {
    display: flex;
    flex: 1;
    align-items: center;
    padding: 4px;
    border-radius: 8px;
    background: #f5f5f5;
}
.scroll-x svg, .scroll-y svg {
    width: 9px;
    height: 9px;
}
.scroll-y {
    flex-direction: column;
    width: 17px;
}
.track {
    flex: 1;
    margin: 0 4px;
}
.scroll-y .track {
    margin: 4px 0;
}
.thumb {
    height: 9px;
    border-radius: 5px;
    background: #6e6e6e;
}
.scroll-y .thumb {
    width: 9px;
}
.page-pos .thumb {
    width: 230px;
    margin-left: 35%;
}
.doc .doc-pos {
    padding-top: 135px;
}
.doc-pos .thumb {
    height: 43px;
}
.sheet-window .scroll-x {
    flex: none;
    height: 17px;
}
.sheet-window .scroll-x .thumb {
    width: 165px;
}
.sheet-window .scroll-y .thumb {
    height: 44px;
}
.pane .scroll-y {
    flex: none;
}
.pane .thumb {
    height: 622px;
}

/* Stencil */
.stencil {
    display: flex;
    flex-direction: column;
    align-items: flex-start;
    width: 52px;
    padding: 13px 5px 0;
    overflow: hidden;
    background: #efefef;
}
.expand {
    margin-left: 24px;
}
.open {
    display: flex;
    align-items: center;
    margin: 14px 0 0 6px;
    padding-bottom: 5px;
}
.open + .master {
    border-top: 1px solid #dcdcdc;
    margin-top: 6px;
}
.master {
    width: 36px;
    height: 36px;
}
.stencil hr {
    width: 27px;
    height: 1px;
    margin: 4px 0;
    border: 0;
    background: #d5d5d5;
}

/* Rulers */
.ruler-top, .ruler-side {
    display: flex;
    overflow: hidden;
    background: #f0f0f0;
    color: #555;
    font-size: 9px;
    line-height: 16px;
}
.ruler-top {
    height: 18px;
    padding-left: 25px;
    border-bottom: 1px solid #808080;
}
.ruler-top span {
    flex: none;
    width: 50px;
    padding-left: 3px;
    border-left: 1px solid #888;
    background:
        repeating-linear-gradient(90deg, transparent 0 9px, #999 9px 10px) 0 100% / 50px 10px no-repeat,
        repeating-linear-gradient(90deg, transparent 0 4px, #999 4px 5px) 0 100% / 50px 6px no-repeat;
}
.ruler-side {
    flex-direction: column;
    width: 17px;
    margin-top: -1px;
    border-right: 1px solid #808080;
    line-height: 14px;
}
.ruler-side span {
    flex: none;
    height: 50px;
    padding-right: 1px;
    border-top: 1px solid #888;
    background:
        repeating-linear-gradient(transparent 0 9px, #999 9px 10px) 0 0 / 10px 50px no-repeat,
        repeating-linear-gradient(transparent 0 4px, #999 4px 5px) 0 0 / 6px 50px no-repeat;
    writing-mode: vertical-rl;
    transform: rotate(180deg);
}
.ruler-side span:first-child {
    height: 25px;
}

/* Drawing page */
.canvas {
    display: flex;
    flex: 1;
    min-height: 0;
    overflow: hidden;
    background: #efefef;
}
.page {
    flex: none;
    width: 1344px;
    padding-right: 31px;
    border-right: 1px solid #aaa;
    background: #fff;
}
.printable {
    height: 100%;
    padding: 17px 0 0 77px;
    border-right: 1px solid #c5c5c5;
}
.chart {
    width: 820px;
    padding: 2px;
    border: 4px solid #4472c4;
}
.gantt {
    width: 808px;
    border-collapse: separate;
    border-spacing: 0;
    border: solid #4472c4;
    border-width: 1px 0 0 1px;
    table-layout: fixed;
    color: #203054;
    font-size: 14px;
    line-height: 20px;
    text-align: center;
}
.col-id { width: 30px; }
.col-name { width: 250px; }
.d28 { width: 40px; }
.d30 { width: 43px; }
.d31 { width: 45px; }
.gantt th, .gantt td {
    padding: 0;
    border: solid #4472c4;
    border-width: 0 1px 1px 0;
    box-shadow: inset 1px 1px 0 #c5d3ee;
}
.gantt th {
    font-style: italic;
    font-weight: 500;
}
.gantt .time {
    height: 31px;
    font-size: 10px;
}
.gantt .months th {
    height: 32px;
    border-right-width: 2px;
    font-size: 10px;
}
.gantt tbody tr {
    height: 37px;
}
.gantt tbody tr:nth-child(even) {
    height: 38px;
}
.gantt .name {
    padding-left: 5px;
    text-align: left;
}
.gantt .sub {
    padding-left: 31px;
}
.task {
    height: 16px;
    border: 1px solid #4472c4;
    background: #a5a5a5;
}
.thin {
    height: 11px;
}
.picked {
    display: flex;
    align-items: center;
    height: 36px;
    border: 1px dashed #8a8a8a;
}
.summary {
    flex: 1;
    height: 20px;
    border: solid #8f8f8f;
    border-width: 3px 2px;
    background: #a5a5a5;
    box-shadow: inset 0 1px #fff, inset 0 2px #4472c4, inset 0 -2px #fff, inset 0 -3px #4472c4;
}
.star {
    width: 20px;
    height: 20px;
    fill: #000;
}

/* Page tabs */
.page-tabs {
    display: flex;
    align-items: center;
    height: 29px;
    border-top: 2px solid #efefef;
}
.page-tab {
    align-self: flex-start;
    width: 52px;
    height: 26px;
    margin: 0 6px 0 7px;
    padding-bottom: 6px;
    background: linear-gradient(#185abd, #185abd) 50% 21px / 41px 2px no-repeat #f0f0f0;
    font-size: 13px;
    line-height: 18px;
}
.all-pages {
    display: flex;
    align-items: center;
    gap: 12px;
    height: 16px;
    padding: 0 11px 0 9px;
    border: solid #c8c8c8;
    border-width: 0 1px;
}
.add-page {
    margin-left: 10px;
}
.splitter {
    margin: 0 2px 0 auto;
    font-size: 16px;
    font-weight: bold;
}
.page-tabs .scroll-x {
    flex: 0 0 711px;
    height: 17px;
}

/* ShapeSheet */
.sheet {
    position: relative;
    display: flex;
    flex: 1;
    flex-direction: column;
    align-items: flex-start;
    gap: 3px;
    min-height: 0;
    padding: 3px;
    overflow: hidden;
    background: #a9a9a9;
}
.cells {
    flex: none;
    width: 1px;
    border: 1px solid #6b6b6b;
    border-spacing: 0;
    table-layout: fixed;
    background: #fff;
    color: #000;
}
.w32 { width: 32px; }
.w128 { width: 128px; }
.w160 { width: 160px; }
.w300 { width: 300px; }
.cells th, .cells td {
    height: 21px;
    padding: 0 3px;
    border: solid #bdbdbd;
    border-width: 0 1px 1px 0;
    overflow: hidden;
    line-height: 20px;
    text-align: left;
    white-space: nowrap;
}
.cells th {
    background: #e2e2e2;
    color: #f00;
    font-weight: normal;
    text-align: right;
}
.cells tr:last-child > * {
    height: 20px;
    border-bottom: 0;
}
.cells .section {
    border-right: 0;
    border-bottom-color: #a0a0a0;
    background: #9ab4d2;
    color: #000;
    font-weight: bold;
    text-align: left;
}
.cells .start {
    padding-left: 9px;
    text-align: left;
}
.cells .heads th, .cells .num {
    border-color: #a0a0a0;
    background: #f0f0f0;
    color: #000;
    font-weight: bold;
    text-align: center;
}
.cells .heads td, .cells .blank {
    border: 0;
}
.cells .current {
    outline: 3px solid #111;
    outline-offset: -2px;
}
.callout-box {
    position: absolute;
    left: 324px;
    top: 168px;
    width: 247px;
    height: 94px;
    border: 3px solid #f00;
    border-radius: 12px;
}
.callout-arrow {
    position: absolute;
    left: 574px;
    top: 192px;
    width: 106px;
    height: 24px;
}
.callout-text {
    position: absolute;
    left: 681px;
    top: 184px;
    margin: 0;
    color: #f00;
    font: bold 23px/28px "Liberation Sans", "Noto Sans CJK SC", sans-serif;
    white-space: nowrap;
}

/* Format pane */
.pane {
    display: flex;
    flex-direction: column;
    width: 386px;
    padding: 16px 14px 20px 12px;
    border-left: 2px solid #e2e2e2;
}
.pane-head {
    display: flex;
    align-items: center;
    gap: 26px;
    padding-right: 2px;
}
.pane-head h2 {
    margin: 0 auto 0 0;
    font-size: 15px;
    line-height: 20px;
}
.pane-tabs {
    display: flex;
    gap: 10px;
    margin: 12px 0 5px 2px;
}
.pane-tabs button {
    display: grid;
    place-items: center;
    width: 32px;
    height: 32px;
}
.pane-tabs .active {
    border: 1px solid #666;
    border-radius: 4px;
    background: #fff;
}
.pane-line {
    width: 358px;
}
.pane-body {
    display: flex;
    flex: 1;
    gap: 3px;
    min-height: 0;
    padding-top: 4px;
}
form {
    flex: 1;
    overflow: hidden;
}
h3 {
    display: flex;
    align-items: center;
    gap: 5px;
    height: 24px;
    margin: 0 0 7px 6px;
    font-size: 12px;
}
.radios {
    margin-left: 22px;
    padding-bottom: 4px;
    border-bottom: 1px solid #c8c8c8;
}
.radios label {
    display: flex;
    align-items: center;
    height: 25px;
}
.radios input {
    appearance: none;
    width: 12px;
    height: 12px;
    margin-right: 6px;
    border: 1px solid #ccc;
    border-radius: 50%;
}
.radios input:checked {
    border: 3px solid #185abd;
    background: #fff;
}
.off {
    color: #b5b5b5;
}
.fields {
    display: flex;
    flex-direction: column;
    gap: 6px;
    margin: 6px 0 14px 32px;
}
.field {
    display: flex;
    align-items: center;
    height: 26px;
}
.field.tall {
    height: 29px;
}
.field.low {
    height: 23px;
}
.field label {
    margin-right: auto;
    white-space: nowrap;
}
.field input[type=range] {
    appearance: none;
    width: 132px;
    height: 9px;
    margin-right: 8px;
    border-left: 2px solid #666;
    background: linear-gradient(#777, #777) 0 4px / 100% 1px no-repeat;
}
.field input[type=range]::-webkit-slider-thumb {
    appearance: none;
}
.drop {
    display: flex;
    align-items: center;
    justify-content: space-between;
    width: 46px;
    height: 29px;
    padding: 0 5px 0 9px;
    border: 1px solid #777;
    border-radius: 4px;
    background: #fff;
}
.focus {
    padding: 0 4px 0 8px;
    border: 2px solid #000;
    background: #f2f2f2;
}
.spin {
    display: flex;
    justify-content: space-between;
    width: 103px;
    height: 26px;
    padding: 0 4px 0 6px;
    border: 1px solid #777;
    border-radius: 4px;
    background: #fff;
}
.spin input {
    width: 70px;
    line-height: 22px;
}
.spin span {
    display: flex;
    flex-direction: column;
    justify-content: space-between;
    padding: 3px 0;
}
.text {
    width: 94px;
    height: 26px;
    padding: 0 6px;
    border: 1px solid #777;
    border-radius: 4px;
    background: #fff;
}
.cap, .mid {
    height: 23px;
}
.field .pick svg {
    margin-right: 4px;
}
.field .pick select {
    padding-left: 5px;
}
.cap {
    width: 50px;
}
.mid {
    width: 65px;
}

/* Status bar */
.status {
    display: flex;
    align-items: center;
    gap: 19px;
    height: 22px;
    padding: 0 9px 0 11px;
    background: #f4f4f4;
}
.zoom {
    display: flex;
    align-items: center;
    gap: 5px;
    margin-left: auto;
}
.zoom .i16 {
    margin-right: 7px;
}
.zoom .present {
    margin: 0 18px 0 11px;
}
.zoom input {
    appearance: none;
    width: 100px;
    height: 12px;
    background: linear-gradient(#666, #666) 0 6px / 100% 1px no-repeat;
}
.zoom input::-webkit-slider-thumb {
    appearance: none;
    width: 5px;
    height: 11px;
    background: #666;
}
.zoom span {
    margin-left: 8px;
}

/* Taskbar */
.taskbar {
    position: relative;
    display: flex;
    height: 40px;
    background: linear-gradient(90deg, #20242d, #2a303c);
    color: #fff;
}
.taskbar button {
    display: grid;
    place-items: center;
    width: 49px;
}
.taskbar .running {
    background: linear-gradient(#76b9ed, #76b9ed) 50% 100% / 40px 2px no-repeat;
}
.taskbar .current {
    padding-top: 2px;
    border-bottom: 2px solid #76b9ed;
    background: #50545c;
}
.tray {
    display: flex;
    align-items: center;
    gap: 8px;
    margin-left: auto;
    padding-right: 17px;
}
.ime {
    margin: 0 6px 0 1px;
    font-size: 13px;
}
.clock {
    display: flex;
    flex-direction: column;
    align-items: center;
    gap: 4px;
    width: 52px;
    margin: 0 16px 0 11px;
}
.notes {
    width: 24px;
    height: 24px;
}
.notes text {
    fill: #fff;
    font-size: 12px;
    font-weight: bold;
}
.watermark {
    position: absolute;
    right: 3px;
    bottom: 10px;
    color: rgba(205, 205, 205, .75);
    font: 35px/40px "Liberation Sans", sans-serif;
    text-shadow: 1px 1px 1px rgba(90, 90, 90, .7);
}
```
